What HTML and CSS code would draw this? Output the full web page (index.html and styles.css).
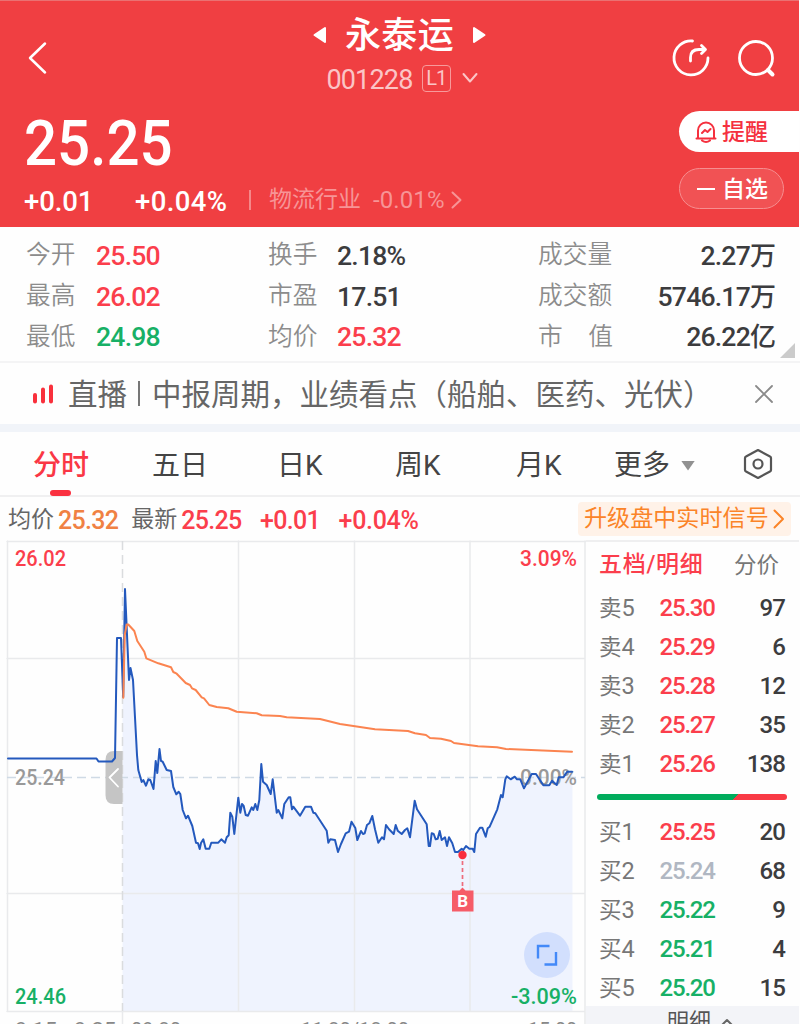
FILE: index.html
```html
<!DOCTYPE html>
<html lang="zh-CN">
<head>
<meta charset="utf-8">
<title>永泰运 001228</title>
<link rel="stylesheet" href="styles.css">
</head>
<body>
<div class="app">
  <header class="header">
    <div class="topbar">
      <svg class="back" width="24" height="36" viewBox="0 0 24 36"><path d="M20 3.500 5 18 20 32.500"/></svg>
      <div class="title">
        <div class="title-main">
          <svg width="14" height="18" viewBox="0 0 14 18"><path d="M12 2v14L1.500 9z"/></svg>
          <h1>永泰运</h1>
          <svg width="14" height="18" viewBox="0 0 14 18"><path d="M2 2v14L12.500 9z"/></svg>
        </div>
        <div class="title-sub">
          <span class="code">001228</span><span class="level">L1</span>
          <svg width="18" height="12" viewBox="0 0 18 12"><path d="M2.500 2l6.500 7.500 6.500-7.500"/></svg>
        </div>
      </div>
      <div class="actions">
        <svg width="40" height="40" viewBox="0 0 40 40"><path d="M21.500 3A17 17 0 1 0 37 20"/><path d="M19.500 23V19.500Q19.500 11.500 28 11.500H33.500"/><path d="M30.500 7.500 34.500 11.500 30.500 15.500"/></svg>
        <svg width="40" height="40" viewBox="0 0 40 40"><circle cx="19" cy="20" r="16.500"/><path d="M31 32 35.500 36.500" stroke-width="4"/></svg>
      </div>
    </div>
    <div class="quote">
      <div class="quote-left">
        <div class="price">25.25</div>
        <div class="changes">
          <span class="chg">+0.01</span><span class="chg pct">+0.04%</span><i class="bar"></i>
          <span class="sector">物流行业</span><span class="sector-pct">-0.01%</span>
          <svg width="12" height="20" viewBox="0 0 12 20"><path d="M1.500 2.500 9.500 10 1.500 17.500"/></svg>
        </div>
      </div>
      <div class="pills">
        <div class="pill alert">
          <svg width="24" height="24" viewBox="0 0 24 24"><path d="M2.500 18.500H21.500M4 18V10.500a8 8 0 0 1 16 0V18M8 20.500q4 3 8 0M8 13l3-3 2.500 2 3-3"/></svg>
          <span>提醒</span>
        </div>
        <div class="pill watch"><i></i><span>自选</span></div>
      </div>
    </div>
  </header>

  <section class="stats">
    <span class="k">今开</span><span class="v up">25.50</span><span class="k">换手</span><span class="v">2.18%</span><span class="k">成交量</span><span class="v end">2.27<b>万</b></span>
    <span class="k">最高</span><span class="v up">26.02</span><span class="k">市盈</span><span class="v">17.51</span><span class="k">成交额</span><span class="v end">5746.17<b>万</b></span>
    <span class="k">最低</span><span class="v down">24.98</span><span class="k">均价</span><span class="v up">25.32</span><span class="k wide"><span>市</span><span>值</span></span><span class="v end">26.22<b>亿</b></span>
    <i class="corner"></i>
  </section>

  <section class="live">
    <svg width="22" height="20" viewBox="0 0 22 20"><path d="M3 11v6.500M11 5.500v12M19 2.500v15"/></svg>
    <span class="live-tag">直播</span><i class="live-sep"></i>
    <span class="live-text">中报周期，业绩看点（船舶、医药、光伏）</span>
    <svg class="close" width="20" height="20" viewBox="0 0 20 20"><path d="M2 2 18 18M18 2 2 18"/></svg>
  </section>

  <nav class="tabs">
    <span class="tab on">分时</span><span class="tab">五日</span><span class="tab">日K</span><span class="tab">周K</span><span class="tab">月K</span>
    <span class="tab more">更多<i></i></span>
    <svg width="30" height="32" viewBox="0 0 30 32"><path d="M15 2 27 8.500Q28 9 28 10V22Q28 23 27 23.500L15 30 3 23.500Q2 23 2 22V10Q2 9 3 8.500z"/><circle cx="15" cy="16" r="4.500"/></svg>
  </nav>

  <section class="info">
    <span class="lbl">均价</span><span class="num avg">25.32</span><span class="lbl latest">最新</span><span class="num">25.25</span><span class="num gap">+0.01</span><span class="num gap">+0.04%</span>
    <div class="upgrade">升级盘中实时信号<svg width="12" height="20" viewBox="0 0 12 20"><path d="M1.500 1.500 10 10 1.500 18.500"/></svg></div>
  </section>

  <main class="board">
    <svg class="chart" width="586" height="484" viewBox="0 540 586 484">
      <path class="area" d="M122.500 1011V697L125 589 129 680 130.500 668 133 680 137 755 138.300 770 141.700 782 143.300 780 146 785.700 148.300 779.300 150.300 780 153.500 789 155.700 761 157.300 773 159.500 749 161 761 162.700 761.700 166.700 770 171 771 173.300 787 176.300 794.300 178.700 791.700 180.300 794 182.700 810 186 818.300 188 815.700 192.300 826 196 842.700 198 843.300 199.700 849 201 843 203.300 839.300 205.700 848.700 209.300 848.700 211.300 842.700 218.300 842.700 221.300 839.300 225 842.700 226.700 837.300 228.700 835.300 230.300 812.700 232.300 816.700 234.300 834 238.300 797.700 240.300 812.700 242 804 243.700 806 245.700 815 248 815.700 251.700 807.300 253.300 810 255.300 804 257.300 810 259.300 800 261.300 764 263 781.700 266.700 785 270.700 794 272.700 779.300 276.700 812.700 278.300 810 282.300 818.300 284.300 804 288.700 797.300 290.300 797.300 292 809.300 293.300 806.700 300 815.700 305.300 806.700 311 806.700 313.300 812.700 315.300 813.300 326.700 830.700 328.300 842.700 330.300 839.300 335 840 338 852 341 844 345.700 833.300 349 831.700 351.500 821.700 355.300 828 357.300 840 361 831 363 834 364.700 833.300 367 825 369.300 823.300 372.300 816 375 829.300 378.300 842.700 382 837.300 384 839.300 386 825 389 829.300 393.700 834 395.700 825 397.700 830.700 401.700 834 405 830 407.300 828.300 410 837.300 414.700 800.700 417 809.300 426.700 824.300 428.700 846 430 846 431.700 833.300 433.700 834 435.700 839.300 437.700 838.700 439.700 831 441.700 840 445 837.300 447 846 449 837.300 452.300 843.300 455 852 458 852 461.700 848.700 463.300 850 466 846 469.300 848.700 472.700 848.700 474.300 852 476 834 480 827.700 482.300 827.700 485.700 836.700 487.700 828.300 489.700 826.700 497.300 809.300 501 795 502.700 797.300 505.300 779.300 506.700 776.300 510.700 779.300 514.700 776.700 517 779.300 520.300 779.300 524 788.300 531.700 774 536 774 543.300 785.300 549.300 785.300 552 780.700 556.700 785 558.700 777.300 563.300 777.300 567.300 771.700 572.500 771.700V1011z"/>
      <path class="grid" d="M7 541.500H586M7 658.500H585M7 893.500H585M7 1011.500H585M7.500 541V1011M238.500 541V1011M354.500 541V1011M470 541V1011M585 541V1024M122.500 1011V1024"/>
      <path class="dash-v" d="M122.500 541V1011"/>
      <path class="dash-h" d="M7 777.500H585"/>
      <text class="t mute" x="15" y="785" textLength="50" lengthAdjust="spacingAndGlyphs">25.24</text>
      <text class="t mute" x="520" y="785" textLength="57" lengthAdjust="spacingAndGlyphs">0.00%</text>
      <path class="handle" d="M122.500 751H114Q105.500 751 105.500 760V795Q105.500 804 114 804H122.500z"/>
      <path class="handle-arrow" d="M118 769 109.500 777.500 118 786.500"/>
      <path class="line" d="M8 758.500H96.500L98.500 761.500H112L115 758 117 638H121L123.200 697 125 589 129 680 130.500 668 133 680 137 755 138.300 770 141.700 782 143.300 780 146 785.700 148.300 779.300 150.300 780 153.500 789 155.700 761 157.300 773 159.500 749 161 761 162.700 761.700 166.700 770 171 771 173.300 787 176.300 794.300 178.700 791.700 180.300 794 182.700 810 186 818.300 188 815.700 192.300 826 196 842.700 198 843.300 199.700 849 201 843 203.300 839.300 205.700 848.700 209.300 848.700 211.300 842.700 218.300 842.700 221.300 839.300 225 842.700 226.700 837.300 228.700 835.300 230.300 812.700 232.300 816.700 234.300 834 238.300 797.700 240.300 812.700 242 804 243.700 806 245.700 815 248 815.700 251.700 807.300 253.300 810 255.300 804 257.300 810 259.300 800 261.300 764 263 781.700 266.700 785 270.700 794 272.700 779.300 276.700 812.700 278.300 810 282.300 818.300 284.300 804 288.700 797.300 290.300 797.300 292 809.300 293.300 806.700 300 815.700 305.300 806.700 311 806.700 313.300 812.700 315.300 813.300 326.700 830.700 328.300 842.700 330.300 839.300 335 840 338 852 341 844 345.700 833.300 349 831.700 351.500 821.700 355.300 828 357.300 840 361 831 363 834 364.700 833.300 367 825 369.300 823.300 372.300 816 375 829.300 378.300 842.700 382 837.300 384 839.300 386 825 389 829.300 393.700 834 395.700 825 397.700 830.700 401.700 834 405 830 407.300 828.300 410 837.300 414.700 800.700 417 809.300 426.700 824.300 428.700 846 430 846 431.700 833.300 433.700 834 435.700 839.300 437.700 838.700 439.700 831 441.700 840 445 837.300 447 846 449 837.300 452.300 843.300 455 852 458 852 461.700 848.700 463.300 850 466 846 469.300 848.700 472.700 848.700 474.300 852 476 834 480 827.700 482.300 827.700 485.700 836.700 487.700 828.300 489.700 826.700 497.300 809.300 501 795 502.700 797.300 505.300 779.300 506.700 776.300 510.700 779.300 514.700 776.700 517 779.300 520.300 779.300 524 788.300 531.700 774 536 774 543.300 785.300 549.300 785.300 552 780.700 556.700 785 558.700 777.300 563.300 777.300 567.300 771.700 572 771.700"/>
      <path class="avg-line" d="M123.300 697.700 124.700 635 126.700 624.500 128.300 624.500 134.300 631 137.300 641 144.300 651.700 146.300 658.300 158.300 663.300 171 667.300 173.300 672 176.700 673.700 185.700 683 190 685 192 688.300 195.700 690 201.700 697.300 204 698.300 209.300 705 216.700 707 228.300 708.300 236.700 711.700 256.700 713.300 261.700 715.300 280 716 286.700 717.300 320 719 340 724 375 729.300 408 731 415 733.300 426 735 430 738 441 738.700 451 741 454 743 478 746.300 497 747.300 506 749 572 751.700"/>
      <path class="mark-stem" d="M462.500 861V888"/>
      <circle class="mark-dot" cx="462.500" cy="855" r="4.200"/>
      <path class="mark-box" d="M452 890.500H459.500L462.500 887.500 465.500 890.500H473.500V911.500H452z"/>
      <text class="mark-text" x="462.700" y="907" text-anchor="middle">B</text>
      <circle class="expand" cx="547" cy="955" r="23"/>
      <path class="expand-icon" d="M549.500 946H538V958.500M556 952V964.500H544.500"/>
      <text class="t up" x="15" y="566" textLength="51" lengthAdjust="spacingAndGlyphs">26.02</text>
      <text class="t up" x="520" y="566" textLength="57" lengthAdjust="spacingAndGlyphs">3.09%</text>
      <text class="t down" x="15" y="1004" textLength="51" lengthAdjust="spacingAndGlyphs">24.46</text>
      <text class="t down" x="511" y="1004" textLength="66" lengthAdjust="spacingAndGlyphs">-3.09%</text>
      <text class="t time" x="15" y="1036.500" textLength="101" lengthAdjust="spacingAndGlyphs">9:15 - 9:25</text>
      <text class="t time" x="131" y="1036.500" textLength="50" lengthAdjust="spacingAndGlyphs">09:30</text>
      <text class="t time" x="301" y="1036.500" textLength="108" lengthAdjust="spacingAndGlyphs">11:30/13:00</text>
      <text class="t time" x="528" y="1036.500" textLength="49" lengthAdjust="spacingAndGlyphs">15:00</text>
    </svg>

    <aside class="book">
      <div class="book-head"><span class="on">五档/明细</span><span>分价</span></div>
      <div class="row"><span>卖<em>5</em></span><span class="p up">25.30</span><span class="q">97</span></div>
      <div class="row"><span>卖<em>4</em></span><span class="p up">25.29</span><span class="q">6</span></div>
      <div class="row"><span>卖<em>3</em></span><span class="p up">25.28</span><span class="q">12</span></div>
      <div class="row"><span>卖<em>2</em></span><span class="p up">25.27</span><span class="q">35</span></div>
      <div class="row"><span>卖<em>1</em></span><span class="p up">25.26</span><span class="q">138</span></div>
      <div class="ratio"></div>
      <div class="row"><span>买<em>1</em></span><span class="p up">25.25</span><span class="q">20</span></div>
      <div class="row"><span>买<em>2</em></span><span class="p flat">25.24</span><span class="q">68</span></div>
      <div class="row"><span>买<em>3</em></span><span class="p down">25.22</span><span class="q">9</span></div>
      <div class="row"><span>买<em>4</em></span><span class="p down">25.21</span><span class="q">4</span></div>
      <div class="row"><span>买<em>5</em></span><span class="p down">25.20</span><span class="q">15</span></div>
      <div class="book-foot">明细<svg width="14" height="10" viewBox="0 0 14 10"><path d="M2 8 7 3 12 8"/></svg></div>
    </aside>
  </main>
</div>
</body>
</html>
```
FILE: styles.css
```css
* { box-sizing: border-box; }
html, body { margin: 0; height: 1024px; overflow: hidden; }
body {
  width: 800px;
  background: #fefefe;
  color: #3c3c3e;
  font-family: Roboto, "Noto Sans CJK SC", sans-serif;
}
svg { display: block; flex: none; fill: none; stroke-linecap: round; stroke-linejoin: round; }
i, em { font-style: normal; }
.up { color: #fb3e4c; }
.down { color: #17b066; }
.flat { color: #b0b7c2; }
.app { width: 800px; height: 1024px; overflow: hidden; display: flex; flex-direction: column; }

/* Header */
.header { width: 799px; height: 227px; flex: none; background: #f03f42; border-top: 1px solid #ea7172; color: #fff; }
.topbar { height: 102px; display: grid; grid-template-columns: 200px 1fr 200px; }
.back { margin: 39px 0 0 25px; stroke: #fff; stroke-width: 2.5; }
.title { display: flex; flex-direction: column; align-items: center; padding-top: 9px; }
.title-main { display: flex; align-items: center; gap: 18px; height: 50px; }
.title-main svg { fill: #fff; stroke: #fff; stroke-width: 2; }
.title-main h1 { margin: 0; padding-top: 2px; font-size: 36px; line-height: 50px; font-weight: 500; letter-spacing: 0.3px; }
.title-sub { display: flex; align-items: center; height: 36px; margin-left: 6px; color: #fbc5c6; }
.title-sub svg { stroke: #fbc5c6; stroke-width: 2; margin-left: 10px; }
.code { padding-top: 4px; font-size: 27px; letter-spacing: -0.8px; }
.level { width: 29px; height: 27px; margin-left: 9px; border: 1.5px solid #f79a9b; border-radius: 4px; font-size: 20px; line-height: 25px; letter-spacing: -1.2px; text-align: center; }
.actions { display: flex; justify-content: flex-end; gap: 26px; padding: 37px 22px 0 0; }
.actions svg { stroke: #fff; stroke-width: 2.8; }
.quote { display: flex; justify-content: space-between; }
.quote-left { padding-left: 24px; }
.price { height: 76px; padding-top: 1px; font-size: 63px; line-height: 80px; font-weight: 500; transform: scaleX(0.925); transform-origin: 0 50%; }
.changes { display: flex; align-items: center; height: 42px; white-space: nowrap; }
.chg { width: 111px; padding-top: 2px; font-size: 27.5px; font-weight: 500; letter-spacing: -0.1px; }
.chg.pct { width: 114px; letter-spacing: 0.4px; }
.bar { width: 2px; height: 20px; background: #f58889; margin-right: 18px; }
.sector { font-size: 23px; line-height: 36px; color: #f79496; width: 104px; }
.sector-pct { font-size: 24px; letter-spacing: 0.1px; color: #f79496; width: 78px; }
.changes svg { stroke: #f79496; stroke-width: 2; }
.pills { display: flex; flex-direction: column; align-items: flex-start; gap: 16px; width: 120px; padding-top: 8px; }
.pill { height: 41px; display: flex; align-items: center; font-size: 23px; line-height: 38px; font-weight: 500; }
.pill span { padding-top: 2px; }
.alert { width: 120px; padding-left: 15px; gap: 4px; background: #fff; color: #f5303e; border-radius: 21px 0 0 21px; }
.alert svg { stroke: #f5303e; stroke-width: 2; }
.watch { width: 105px; padding-left: 17px; border: 1.5px solid #f68e90; border-radius: 21px; background: #f15254; gap: 7px; }
.watch i { width: 18px; height: 2px; background: #fff; }

/* Key figures */
.stats {
  position: relative; height: 136px; flex: none; padding: 7px 24px 0 26px;
  display: grid; grid-template-columns: 70px 172px 69px 201px 90px 1fr; grid-auto-rows: 40.7px; align-items: center;
  border-bottom: 2px solid #f4f4f5; line-height: 40px;
}
.k { padding-top: 2px; font-size: 24.7px; font-weight: 350; color: #8c8c8c; white-space: nowrap; }
.k.wide { display: flex; justify-content: space-between; width: 75px; }
.v { font-size: 26.6px; font-weight: 500; letter-spacing: -0.8px; padding-top: 3px; }
.v b { font-size: 26px; font-weight: 500; letter-spacing: 0; }
.end { text-align: right; white-space: nowrap; }
.corner { position: absolute; right: 5px; bottom: 3px; width: 15px; height: 15px; background: #cbcbcb; clip-path: polygon(100% 0, 100% 100%, 0 100%); }

/* Live banner */
.live { height: 61px; flex: none; display: flex; align-items: center; padding: 0 26px 0 32px; font-size: 29.5px; line-height: 60px; color: #666; white-space: nowrap; }
.live svg { stroke: #f9303c; stroke-width: 4; }
.live-tag { margin-left: 14px; padding-top: 3px; width: 69px; }
.live-sep { width: 2px; height: 25px; background: #777; margin: 0 12px 0 1px; }
.live-text { width: 603px; padding-top: 3px; }
.live .close { stroke: #8a8a8a; stroke-width: 1.8; }

/* Tabs */
.tabs { height: 73px; flex: none; border-top: 8px solid #f1f4f9; border-bottom: 2px solid #f0f0f1; display: grid; grid-template-columns: 119px 125px 118px 121px 98px 128px 30px; padding-left: 33px; font-size: 28px; line-height: 67px; color: #444; }
.tab.on { font-weight: 500; color: #fa3745; display: flex; flex-direction: column; }
.tab.on::after { content: ""; width: 21px; height: 6px; margin: -9px 0 0 17px; background: #fa3140; border-radius: 3px; }
.more { display: flex; align-items: center; gap: 11px; }
.more i { width: 14px; height: 10px; background: #919191; clip-path: polygon(0 0, 100% 0, 50% 100%); }
.tabs svg { margin: 15.5px 0 0 1px; stroke: #555; stroke-width: 2.2; }

/* Summary line */
.info { height: 43px; flex: none; display: flex; align-items: center; padding: 0 9px 0 8px; white-space: nowrap; }
.lbl { padding-top: 3px; font-size: 23px; line-height: 40px; color: #666; width: 50px; }
.latest { margin-left: 13px; }
.num { padding-top: 3px; font-size: 25px; font-weight: 500; letter-spacing: -0.7px; color: #fb3e4c; }
.num.avg { color: #f08143; }
.num.gap { margin-left: 18.5px; }
.num.gap + .gap { letter-spacing: -0.3px; }
.upgrade { margin-left: auto; width: 213px; height: 34px; padding-left: 6px; background: #fff2e8; border-radius: 4px; color: #fb8428; font-size: 23.1px; line-height: 36px; display: flex; align-items: center; gap: 4px; }
.upgrade svg { stroke: #fb8428; stroke-width: 2; }

/* Chart */
.board { flex: none; height: 484px; display: flex; }
.chart { overflow: hidden; }
.area { fill: #eff3fe; }
.grid { stroke: #e9eaec; stroke-width: 1.5; }
.dash-v { stroke: #dadcde; stroke-width: 1.5; stroke-dasharray: 9 5; stroke-linecap: butt; }
.dash-h { stroke: #cfdae5; stroke-width: 1.5; stroke-dasharray: 9 5; stroke-linecap: butt; }
.line { stroke: #2459bd; stroke-width: 2; }
.avg-line { stroke: #fb8450; stroke-width: 2; }
.handle { fill: #c5c5c5; }
.handle-arrow { stroke: #fff; stroke-width: 1.8; }
.mark-stem { stroke: #ee6c7c; stroke-width: 1.7; stroke-dasharray: 4 3; stroke-linecap: butt; }
.mark-dot { fill: #fa2e3c; }
.mark-box { fill: #f65c68; }
.mark-text { fill: #fff; font-size: 17px; font-weight: 700; }
.expand { fill: #d2dffd; }
.expand-icon { stroke: #4389f8; stroke-width: 2.4; stroke-linecap: butt; stroke-linejoin: miter; }
.t { font-size: 21.5px; font-weight: 500; fill: currentColor; }
.mute { color: #999; }
.time { color: #888; font-size: 20px; font-weight: 400; }

/* Order book */
.book { width: 213px; border-top: 2px solid #efeff0; font-size: 22.5px; }
.book-head { display: flex; justify-content: space-between; height: 46px; padding: 0 20px 0 13px; line-height: 46px; color: #777; }
.book-head .on { color: #fb3e4c; font-weight: 500; font-size: 23px; letter-spacing: 0.7px; }
.row { height: 39px; display: grid; grid-template-columns: 60.5px 70px 1fr; align-items: center; padding: 0 14px 0 13px; line-height: 38px; color: #777; }
.row em { font-size: 23.5px; }
.p, .q { font-size: 24px; font-weight: 500; letter-spacing: -1.2px; }
.q { text-align: right; color: #3c3c3e; letter-spacing: -0.9px; }
.ratio { height: 6px; margin: 11px 12px 12px 11px; border-radius: 3px; background: linear-gradient(135deg, #00ac5c 72%, #f93a45 72%); }
.book-foot { height: 30px; margin-top: -1px; padding-left: 16px; background: #f3f4f8; display: flex; justify-content: center; gap: 9px; font-size: 22px; line-height: 31px; color: #555; }
.book-foot svg { stroke: #666; stroke-width: 2; margin-top: 11px; }
```
